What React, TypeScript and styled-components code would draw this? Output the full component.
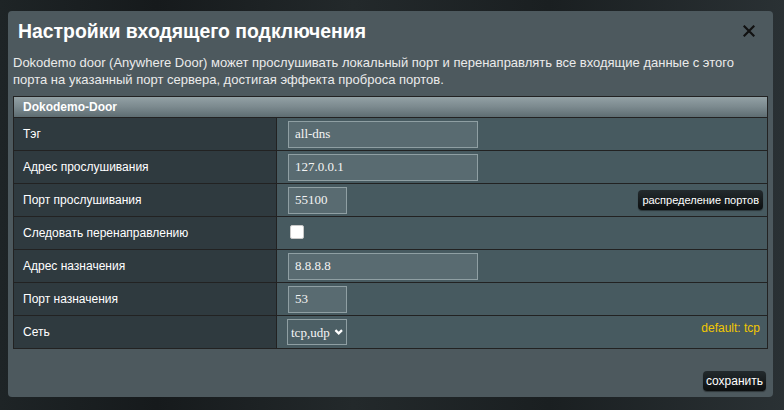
import React from 'react';
import styled, { createGlobalStyle } from 'styled-components';

const GlobalStyle = createGlobalStyle`
  html, body {
    margin: 0;
    padding: 0;
    background: #1c2123;
  }
  body {
    font-family: 'Liberation Sans', Arial, sans-serif;
  }
`;

const StyledBackdrop = styled.div`
  width: 784px;
  height: 410px;
  box-sizing: border-box;
  padding: 11px 11px 13px 8px;
  background: linear-gradient(90deg, #1e2426 0%, #161a1c 20%, #23292b 45%, #1a1f21 70%, #2a3134 100%);
  display: flex;
`;

const StyledDialog = styled.div`
  flex: 1;
  background-color: #4d595e;
  border-radius: 4px;
  display: flex;
  flex-direction: column;
  padding: 0 5px 6px 5px;
`;

const StyledHeader = styled.div`
  display: flex;
  justify-content: space-between;
  align-items: center;
  height: 40px;
  padding: 0 13px 0 5px;
`;

const StyledTitle = styled.h1`
  margin: 0;
  font-family: 'Liberation Sans', Arial, sans-serif;
  font-weight: bold;
  font-size: 19.4px;
  color: #ffffff;
`;

const StyledClose = styled.button`
  border: none;
  background: none;
  padding: 0;
  width: 12px;
  height: 12px;
  display: flex;
  cursor: pointer;
`;

const StyledDescription = styled.p`
  margin: 3px 0 8px 0;
  font-size: 13px;
  line-height: 17px;
  color: #ebebeb;
`;

const StyledTable = styled.div`
  border: 1px solid #222;
  display: flex;
  flex-direction: column;
`;

const StyledTableHead = styled.div`
  height: 20px;
  line-height: 20px;
  padding-left: 9px;
  font-size: 12px;
  font-weight: bold;
  color: #ffffff;
  background: linear-gradient(180deg, #93a1a5 0%, #7b898e 50%, #5e6d72 100%);
  border-bottom: 1px solid #222;
`;

const StyledRow = styled.div`
  box-sizing: border-box;
  display: grid;
  grid-template-columns: 263px 1fr;
  height: 33px;
  border-bottom: 1px solid #222;
  &:last-child {
    border-bottom: none;
    height: 32px;
  }
`;

const StyledLabel = styled.div`
  background-color: #2f3a3f;
  border-right: 1px solid #222;
  padding-left: 9px;
  display: flex;
  align-items: center;
  font-size: 12px;
  color: #ffffff;
`;

const StyledValue = styled.div`
  background-color: #475a60;
  display: flex;
  align-items: center;
  justify-content: space-between;
  padding: 0 4px 0 11px;
`;

const StyledInput = styled.input<{ $w: number }>`
  box-sizing: border-box;
  width: ${(p) => p.$w}px;
  height: 27px;
  background-color: #596b71;
  border: 1px solid #8f9fa3;
  color: #f4f4f4;
  font-family: 'Liberation Serif', 'Times New Roman', serif;
  font-size: 13px;
  padding: 0 6px;
  outline: none;
`;

const StyledCheckbox = styled.span`
  width: 12px;
  height: 12px;
  margin: 0 0 2px 2px;
  background: #ffffff;
  border-radius: 2px;
  border: 1px solid #c8c8c8;
`;

const StyledSelectBox = styled.label`
  box-sizing: border-box;
  display: flex;
  align-items: center;
  gap: 3px;
  height: 26px;
  width: 60px;
  margin-left: -1px;
  padding: 0 3px;
  border: 1px solid #8f9fa3;
  background-color: #4c5f65;
`;

const StyledSelect = styled.select`
  appearance: none;
  border: none;
  background: transparent;
  color: #f4f4f4;
  font-family: 'Liberation Serif', 'Times New Roman', serif;
  font-size: 13px;
  padding: 0;
  width: 42px;
  outline: none;
`;

const StyledDarkButton = styled.button<{ $size?: number; $pad?: number }>`
  height: 20px;
  padding: 0 ${(p) => p.$pad ?? 4}px;
  border: none;
  border-radius: 4px;
  background: linear-gradient(180deg, #232a2d 0%, #0c0f10 100%);
  color: #ffffff;
  font-family: 'Liberation Sans', Arial, sans-serif;
  font-size: ${(p) => p.$size ?? 12}px;
  box-shadow: 0 1px 1px rgba(0, 0, 0, 0.4);
`;

const StyledHint = styled.span`
  color: #f2c800;
  font-size: 12px;
  margin: 0 3px 8px 0;
`;

const StyledFooter = styled.div`
  margin-top: auto;
  display: flex;
  justify-content: flex-end;
  padding-right: 2px;
`;

const rows = [
  { label: 'Тэг', value: 'all-dns', w: 190 },
  { label: 'Адрес прослушивания', value: '127.0.0.1', w: 190 },
];

const CloseIcon = () => (
  <svg width="12" height="12" viewBox="0 0 12 12">
    <path d="M1.5 1.5 L10.5 10.5 M10.5 1.5 L1.5 10.5" stroke="#111" strokeWidth="2.2" strokeLinecap="square" />
  </svg>
);

const ChevronIcon = () => (
  <svg width="10" height="8" viewBox="0 0 10 8">
    <path d="M1.5 2 L5 5.5 L8.5 2" stroke="#fff" strokeWidth="2.4" fill="none" />
  </svg>
);

const App = () => {
  return (
    <>
      <GlobalStyle />
      <StyledBackdrop>
        <StyledDialog>
          <StyledHeader>
            <StyledTitle>Настройки входящего подключения</StyledTitle>
            <StyledClose aria-label="close">
              <CloseIcon />
            </StyledClose>
          </StyledHeader>
          <StyledDescription>
            Dokodemo door (Anywhere Door) может прослушивать локальный порт и перенаправлять все входящие данные с этого
            порта на указанный порт сервера, достигая эффекта проброса портов.
          </StyledDescription>
          <StyledTable>
            <StyledTableHead>Dokodemo-Door</StyledTableHead>
            {rows.map((r) => (
              <StyledRow key={r.label}>
                <StyledLabel>{r.label}</StyledLabel>
                <StyledValue>
                  <StyledInput $w={r.w} defaultValue={r.value} />
                </StyledValue>
              </StyledRow>
            ))}
            <StyledRow>
              <StyledLabel>Порт прослушивания</StyledLabel>
              <StyledValue>
                <StyledInput $w={59} defaultValue="55100" />
                <StyledDarkButton $size={11}>распределение портов</StyledDarkButton>
              </StyledValue>
            </StyledRow>
            <StyledRow>
              <StyledLabel>Следовать перенаправлению</StyledLabel>
              <StyledValue>
                <StyledCheckbox />
              </StyledValue>
            </StyledRow>
            <StyledRow>
              <StyledLabel>Адрес назначения</StyledLabel>
              <StyledValue>
                <StyledInput $w={190} defaultValue="8.8.8.8" />
              </StyledValue>
            </StyledRow>
            <StyledRow>
              <StyledLabel>Порт назначения</StyledLabel>
              <StyledValue>
                <StyledInput $w={59} defaultValue="53" />
              </StyledValue>
            </StyledRow>
            <StyledRow>
              <StyledLabel>Сеть</StyledLabel>
              <StyledValue>
                <StyledSelectBox>
                  <StyledSelect defaultValue="tcp,udp">
                    <option value="tcp">tcp</option>
                    <option value="udp">udp</option>
                    <option value="tcp,udp">tcp,udp</option>
                  </StyledSelect>
                  <ChevronIcon />
                </StyledSelectBox>
                <StyledHint>default: tcp</StyledHint>
              </StyledValue>
            </StyledRow>
          </StyledTable>
          <StyledFooter>
            <StyledDarkButton $pad={3}>сохранить</StyledDarkButton>
          </StyledFooter>
        </StyledDialog>
      </StyledBackdrop>
    </>
  );
};

export default App;
